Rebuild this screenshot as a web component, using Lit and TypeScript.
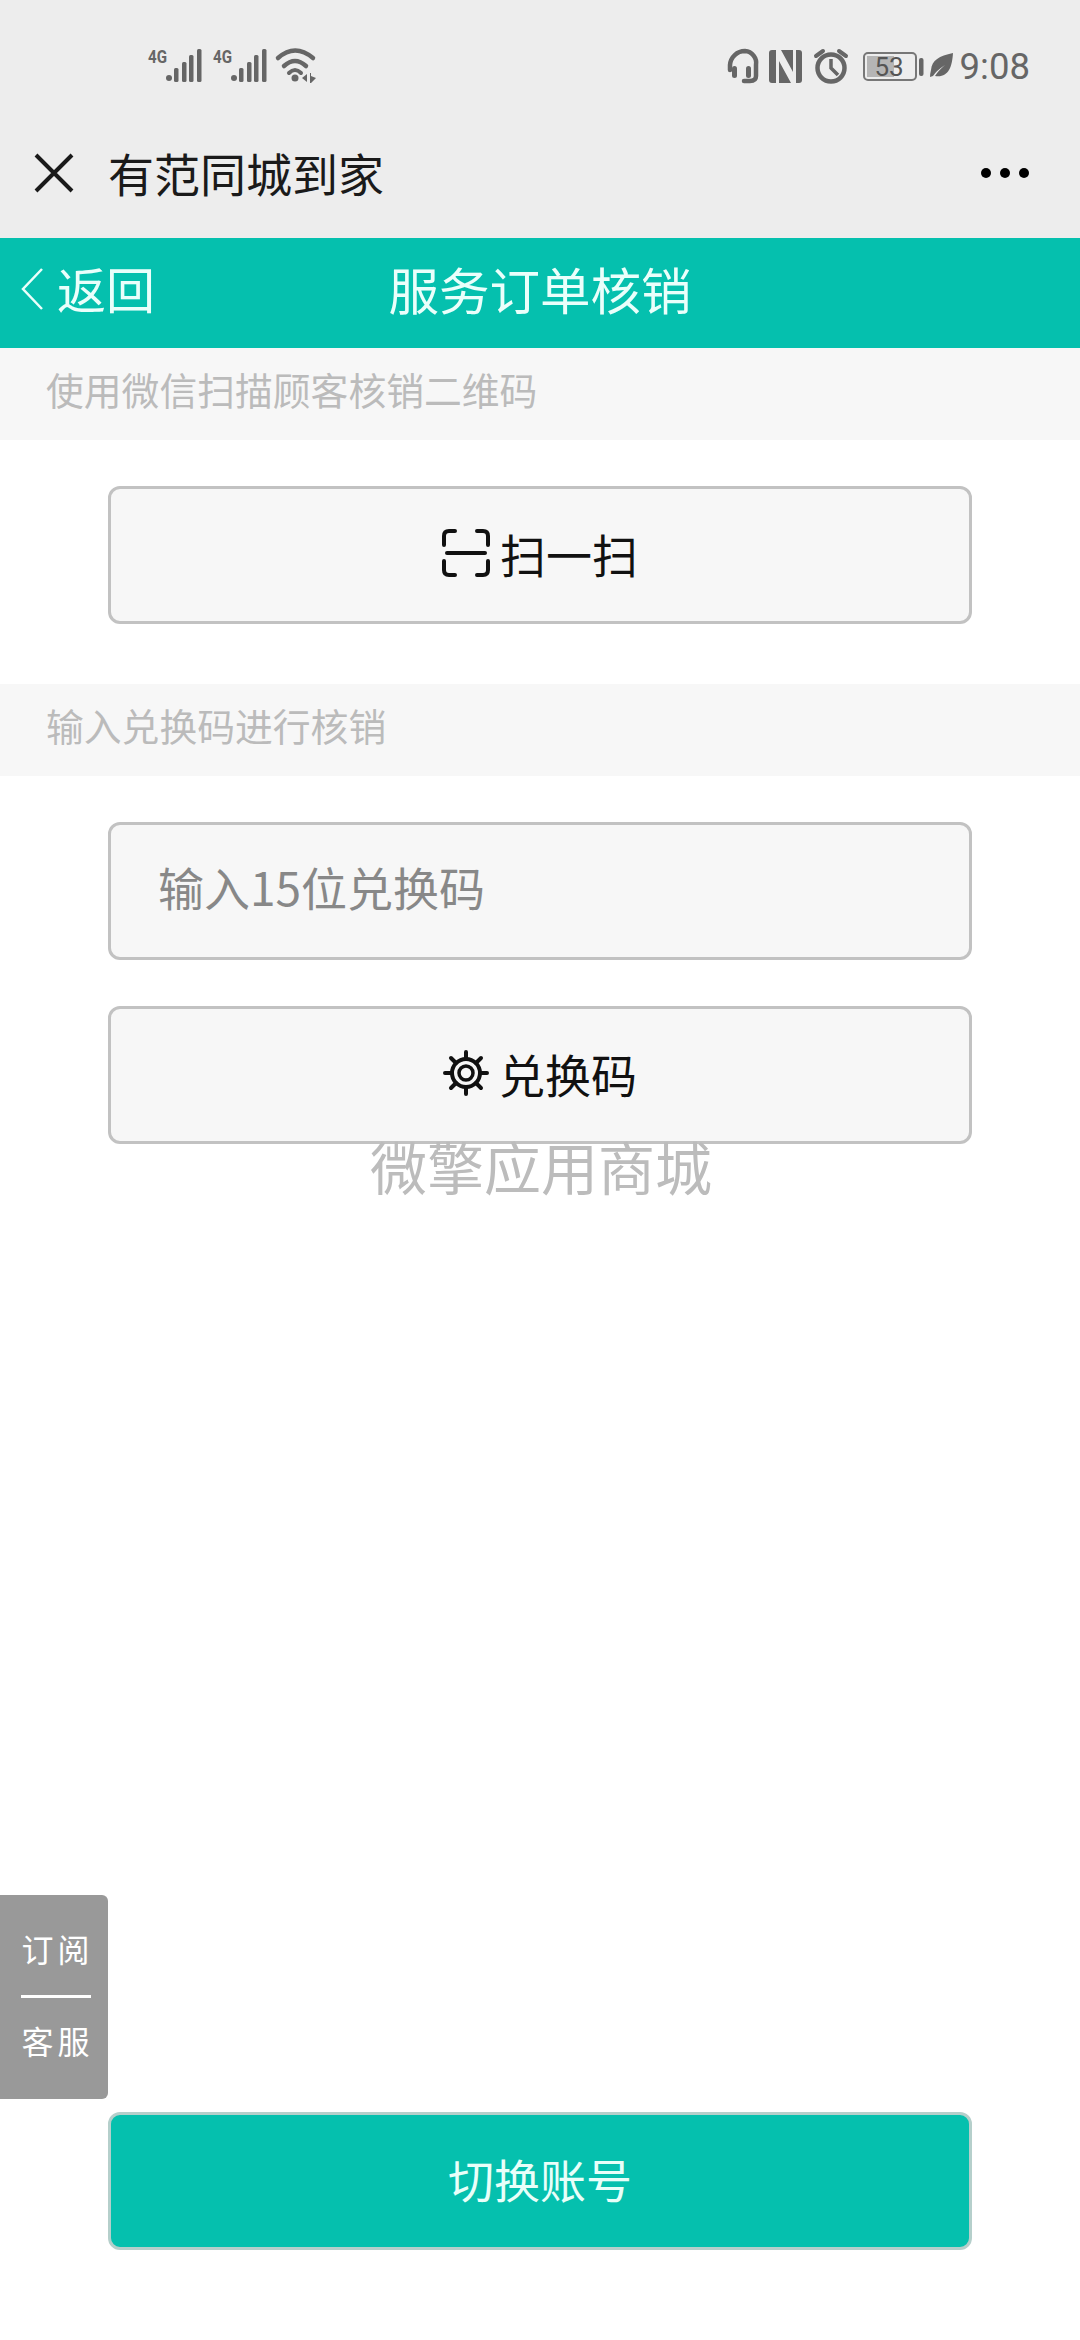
import { LitElement, html, css, svg } from "lit";
import { customElement } from "lit/decorators.js";

const cell = (x: number) => svg`
  <text class="g4" x="${x}" y="63" textLength="19" lengthAdjust="spacingAndGlyphs">4G</text>
  <circle cx="${x + 21}" cy="78" r="3" fill="#666"/>
  <rect x="${x + 26}" y="68" width="4.5" height="14" rx="1.5" fill="#666"/>
  <rect x="${x + 34}" y="62" width="4.5" height="20" rx="1.5" fill="#666"/>
  <rect x="${x + 41}" y="55" width="4.5" height="27" rx="1.5" fill="#666"/>
  <rect x="${x + 49}" y="49" width="4.5" height="33" rx="1.5" fill="#666"/>`;

@customElement("app-root")
export class AppRoot extends LitElement {
  static styles = css`
    :host { display: block; width: 1080px; height: 2340px; position: relative; overflow: hidden; background: #fff; font-family: "Noto Sans CJK SC", "Noto Sans", sans-serif; }
    .page { display: flex; flex-direction: column; height: 2340px; }
    .chrome { height: 238px; background: #ededed; flex: none; display: flex; flex-direction: column; }
    .status { height: 128px; display: flex; align-items: flex-start; justify-content: space-between; flex: none; }
    .status svg { display: block; }
    .g4 { font: 700 19px "Roboto", sans-serif; fill: #666; }
    .rightstatus { display: flex; align-items: flex-start; padding-right: 50px; }
    .time { font: 400 36.5px/44px "Roboto", sans-serif; color: #666; margin-top: 45px; margin-left: 4px; }
    .title { height: 94px; display: flex; align-items: center; padding: 0 51px 0 34px; color: #1a1a1a; margin-top: -2px; }
    .title .name { font-size: 46px; line-height: 60px; margin-left: 34px; flex: 1; padding-bottom: 2px; }
    .teal { height: 110px; box-sizing: border-box; padding-bottom: 11px; background: #05c0ae; flex: none; position: relative; display: flex; align-items: center; justify-content: center; color: #eafffb; }
    .teal h1 { margin: 0; font-weight: 400; font-size: 50.5px; line-height: 70px; }
    .back { position: absolute; left: 20px; top: 0; height: 102px; display: flex; align-items: center; font-size: 49px; gap: 13px; }
    .back span { padding-bottom: 4px; }
    .sect { height: 92px; background: #f7f7f7; color: #bbb; font-size: 37.8px; line-height: 81px; padding-left: 46px; flex: none; box-sizing: border-box; }
    .group { padding: 46px 108px 0; display: flex; flex-direction: column; gap: 46px; flex: none; }
    .group.first { padding-bottom: 60px; }
    .box { height: 138px; box-sizing: border-box; background: #f7f7f7; border: 3px solid #c2c2c2; border-radius: 12px; display: flex; align-items: center; justify-content: center; color: #111; font-size: 46px; gap: 10px; padding-bottom: 4px; }
    .box.input { justify-content: flex-start; padding-left: 47px; padding-bottom: 10px; color: #888; }
    .mark { text-align: center; font-size: 57px; line-height: 42px; height: 58px; color: #bcbcbc; flex: none; margin: 0; padding-left: 2px; }
    .spacer { flex: 1; }
    .bottom { padding: 0 108px 90px; flex: none; }
    .switch { height: 138px; box-sizing: border-box; background: #05c0ae; border: 3px solid #b5cfcb; border-radius: 12px; color: #e8fff9; font-size: 46px; display: flex; align-items: center; justify-content: center; padding-bottom: 6px; }
    .float { position: absolute; left: 0; top: 1895px; width: 108px; height: 204px; background: #999; border-radius: 0 6px 6px 0; color: #fff; font-size: 32px; display: flex; flex-direction: column; align-items: center; box-sizing: border-box; padding: 30px 0 0 3px; }
    .float span { line-height: 46px; letter-spacing: 4px; padding-left: 4px; }
    .float i { display: block; width: 70px; height: 3px; background: #fff; margin: 24px 0 19px; }
  `;

  render() {
    return html`<div class="page">
      <div class="chrome">
        <div class="status">
          <svg width="330" height="128" viewBox="0 0 330 128">
            ${cell(148)}
            ${cell(213)}
            <g fill="none" stroke="#666" stroke-linecap="round">
              <path d="M278 58 Q295 43 313 58" stroke-width="4.5"/>
              <path d="M284 66 Q295 56 306 66" stroke-width="4.5"/>
              <path d="M289 73 Q295 67 301 73" stroke-width="4"/>
            </g>
            <circle cx="295" cy="78" r="3.5" fill="#666"/>
            <path d="M307 74 L302 78 L307 82 Z M310 73 V83 H311 L316 78 L311 76 V73 Z" fill="#666"/>
          </svg>
          <div class="rightstatus">
            <svg width="235" height="128" viewBox="720 0 235 128">
              <path d="M729 70 V65 A15 15 0 0 1 744 51 A12 12 0 0 1 755 65 V76 Q755 81 749 81 H743" fill="none" stroke="#666" stroke-width="4.5" stroke-linecap="round"/>
              <rect x="731" y="66" width="5" height="12" rx="2.5" fill="#666"/>
              <rect x="745" y="66" width="5" height="12" rx="2.5" fill="#666"/>
              <rect x="768" y="50" width="33" height="33" rx="3" fill="#666"/>
              <path d="M775 50 H780 L792 72 V50 H795 V83 H790 L778 61 V83 H775 Z" fill="#ededed"/>
              <circle cx="830" cy="68" r="13.5" fill="none" stroke="#666" stroke-width="4.5"/>
              <path d="M830 59 V68 L837 75" fill="none" stroke="#666" stroke-width="3.5"/>
              <path d="M815 56 L822 51 M845 56 L838 51" stroke="#666" stroke-width="4" stroke-linecap="round"/>
              <rect x="863" y="53" width="52" height="27" rx="4" fill="none" stroke="#777" stroke-width="2"/>
              <rect x="866" y="56" width="27" height="21" fill="#b5b5b5"/>
              <text x="888" y="76" text-anchor="middle" font-family="Roboto" font-size="26" fill="#555">53</text>
              <rect x="918" y="58" width="4.5" height="18" rx="2" fill="#666"/>
              <path d="M952 53 C938 56 931 60 930 70 Q929 74 929 77 L932 76 Q935 71 944 65 Q937 71 934 76 C947 78 951 68 952 53 Z" fill="#666"/>
            </svg>
            <div class="time">9:08</div>
          </div>
        </div>
        <div class="title">
          <svg width="40" height="40" viewBox="0 0 40 40"><path d="M2 2 L38 38 M38 2 L2 38" stroke="#1a1a1a" stroke-width="4" fill="none"/></svg>
          <div class="name">有范同城到家</div>
          <svg width="48" height="10" viewBox="0 0 48 10"><circle cx="5" cy="5" r="5" fill="#000"/><circle cx="24" cy="5" r="5" fill="#000"/><circle cx="43" cy="5" r="5" fill="#000"/></svg>
        </div>
      </div>
      <div class="teal">
        <div class="back">
          <svg width="24" height="44" viewBox="0 0 24 44"><path d="M22 2 L3 22 L22 42" fill="none" stroke="#eafffb" stroke-width="2.5"/></svg>
          <span>返回</span>
        </div>
        <h1>服务订单核销</h1>
      </div>
      <div class="sect">使用微信扫描顾客核销二维码</div>
      <div class="group first">
        <div class="box">
          <svg width="48" height="48" viewBox="0 0 48 48" fill="none" stroke="#111" stroke-width="4" stroke-linecap="round">
            <path d="M2 16 V7 Q2 2 7 2 H13 M35 2 H41 Q46 2 46 7 V16 M2 32 V41 Q2 46 7 46 H13 M35 46 H41 Q46 46 46 41 V32"/>
            <path d="M5 24 H43"/>
          </svg>
          <span>扫一扫</span>
        </div>
      </div>
      <div class="sect">输入兑换码进行核销</div>
      <div class="group">
        <div class="box input">输入15位兑换码</div>
        <div class="box">
          <svg width="46" height="46" viewBox="0 0 46 46" fill="none" stroke="#111" stroke-linecap="round">
            <circle cx="23" cy="23" r="14" stroke-width="4"/>
            <circle cx="23" cy="23" r="7" stroke-width="3.5"/>
            <path d="M23 2 V9 M23 37 V44 M2 23 H9 M37 23 H44 M8 8 L13 13 M38 8 L33 13 M8 38 L13 33 M38 38 L33 33" stroke-width="4"/>
          </svg>
          <span>兑换码</span>
        </div>
      </div>
      <p class="mark">微擎应用商城</p>
      <div class="spacer"></div>
      <div class="bottom"><div class="switch">切换账号</div></div>
    </div>
    <div class="float"><span>订阅</span><i></i><span>客服</span></div>`;
  }
}
